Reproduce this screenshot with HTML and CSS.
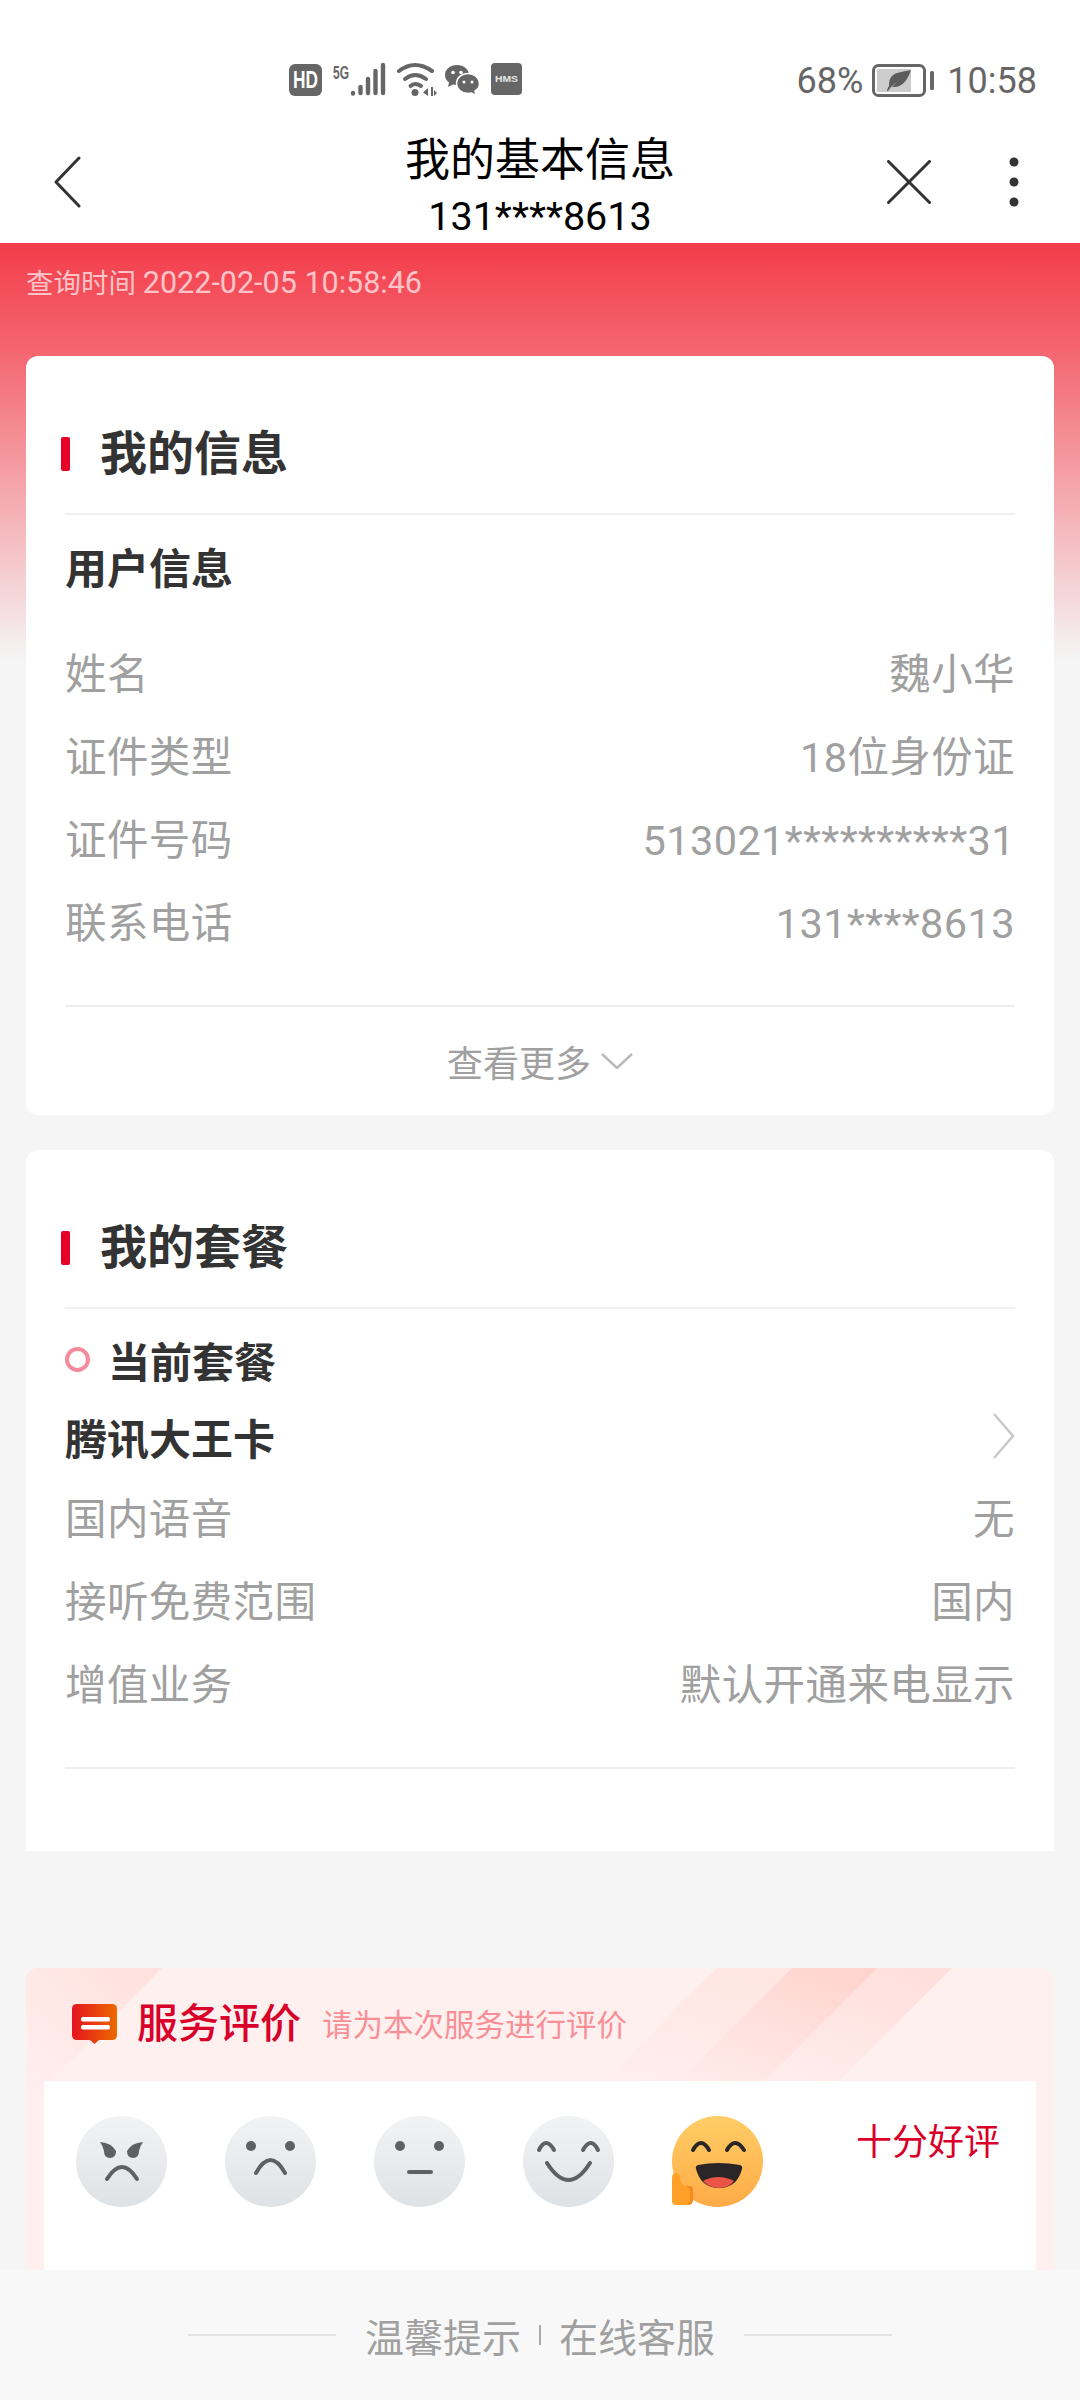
FILE: index.html
```html
<!DOCTYPE html>
<html>
<head>
    <title>我的基本信息</title>
    <link rel="stylesheet" href="styles.css">
</head>
<body>
    <div class="status-bar">
        <svg class="status-icons" viewBox="289 60 234 40" width="234" height="40">
            <rect x="289" y="64" width="33" height="32" rx="6" fill="#666"/>
            <text x="293" y="88" class="icon-text-hd" textLength="25" lengthAdjust="spacingAndGlyphs">HD</text>
            <text x="333" y="79" class="icon-text-5g" textLength="16" lengthAdjust="spacingAndGlyphs">5G</text>
            <g stroke="#666" stroke-width="4.4" stroke-linecap="round">
                <path d="M353 93.5V93"/>
                <path d="M360.5 93V87"/>
                <path d="M368 93V79"/>
                <path d="M375.500 93V71"/>
                <path d="M383 93V65"/>
            </g>
            <g stroke="#666" stroke-width="4" fill="none" stroke-linecap="round">
                <path d="M399 71Q415 59 432 71"/>
                <path d="M405 79Q415 71 426 79"/>
                <path d="M410.500 86Q415 82 421 86"/>
            </g>
            <circle cx="415" cy="92.500" r="3.500" fill="#666"/>
            <path d="M423 92.500L428 88V96ZM431 87H433V96H431ZM434 90L437 93L434 96Z" fill="#666"/>
            <path d="M457 65C450 65 445 69.500 445 75C445 78 446.500 80.500 449 82.500L448 87L453 84.500C454 84.700 455.500 85 457 85C464 85 469 80.500 469 75C469 69.500 464 65 457 65Z" fill="#666"/>
            <path d="M468 73.500C461.500 73.500 456.500 78 456.500 83.500C456.500 89 461.500 93.500 468 93.500C469.500 93.500 470.500 93.300 471.500 93L476 95.500L475 91C477.500 89.500 479.500 86.500 479.500 83.500C479.500 78 474.500 73.500 468 73.500Z" fill="#666" stroke="#fff" stroke-width="1.500"/>
            <circle cx="453" cy="72.500" r="1.800" fill="#fff"/>
            <circle cx="461" cy="72.500" r="1.800" fill="#fff"/>
            <circle cx="464" cy="82" r="1.500" fill="#fff"/>
            <circle cx="472" cy="82" r="1.500" fill="#fff"/>
            <rect x="491" y="63" width="31" height="32" rx="4" fill="#666"/>
            <text x="495" y="82" class="icon-text-hms" textLength="23" lengthAdjust="spacingAndGlyphs">HMS</text>
        </svg>
        <div class="status-right">
            <span>68%</span>
            <svg viewBox="0 0 62 34" width="62" height="34">
                <rect x="1.500" y="1.500" width="51" height="30" rx="5" fill="none" stroke="#666" stroke-width="3"/>
                <rect x="5" y="5" width="34" height="23" rx="1" fill="#ccc"/>
                <rect x="58" y="7" width="4" height="19" rx="1.500" fill="#666"/>
                <path d="M16 27C17 26 18 24 20 22C23 19 27 17 29 15C26 18 22 20 20 23C24 23 33 24 39 6C30 8 21 8 18 15C17 18 17 20 17 22C16 24 15 25 15 27Z" fill="#5c5c5c"/>
            </svg>
            <span class="status-time">10:58</span>
        </div>
    </div>

    <div class="nav-bar">
        <svg class="nav-back" viewBox="0 0 28 52" width="28" height="52">
            <path d="M26 2L3 26L26 50" fill="none" stroke="#333" stroke-width="3" stroke-linecap="round" stroke-linejoin="round"/>
        </svg>
        <div class="nav-title">
            <div class="nav-name">我的基本信息</div>
            <div class="nav-phone">131****8613</div>
        </div>
        <div class="nav-actions">
            <svg viewBox="0 0 44 44" width="44" height="44">
                <path d="M1.500 1.500L42.500 42.500M42.500 1.500L1.500 42.500" stroke="#333" stroke-width="3" stroke-linecap="round"/>
            </svg>
            <svg viewBox="0 0 10 52" width="10" height="52">
                <circle cx="5" cy="6" r="4.500" fill="#333"/>
                <circle cx="5" cy="26" r="4.500" fill="#333"/>
                <circle cx="5" cy="46" r="4.500" fill="#333"/>
            </svg>
        </div>
    </div>

    <div class="content">
        <div class="query-time">查询时间 <span class="query-value">2022-02-05 10:58:46</span></div>

        <div class="card">
            <div class="card-head"><i class="mark"></i>我的信息</div>
            <div class="sub-title">用户信息</div>
            <div class="rows">
                <div class="row"><span>姓名</span><span>魏小华</span></div>
                <div class="row"><span>证件类型</span><span>18位身份证</span></div>
                <div class="row"><span>证件号码</span><span>513021**********31</span></div>
                <div class="row"><span>联系电话</span><span>131****8613</span></div>
            </div>
            <div class="more">
                查看更多
                <svg viewBox="0 0 32 16" width="32" height="16">
                    <path d="M1 1L16 15L31 1" fill="none" stroke="#bbb" stroke-width="2.500"/>
                </svg>
            </div>
        </div>

        <div class="card card-plan">
            <div class="card-head"><i class="mark"></i>我的套餐</div>
            <div class="sub-title"><i class="ring"></i>当前套餐</div>
            <div class="plan-name">
                腾讯大王卡
                <svg viewBox="0 0 22 46" width="22" height="46">
                    <path d="M1 1L20 23L1 45" fill="none" stroke="#c8c8c8" stroke-width="2.500"/>
                </svg>
            </div>
            <div class="rows">
                <div class="row"><span>国内语音</span><span>无</span></div>
                <div class="row"><span>接听免费范围</span><span>国内</span></div>
                <div class="row"><span>增值业务</span><span>默认开通来电显示</span></div>
            </div>
        </div>

        <div class="rating">
            <svg class="rating-bg" viewBox="0 0 1028 302" width="1028" height="302">
                <defs>
                    <linearGradient id="g-left" x1="1" y1="0" x2="0" y2="1">
                        <stop offset="0" stop-color="#ffe0dc"/>
                        <stop offset="1" stop-color="#fff0f0"/>
                    </linearGradient>
                    <linearGradient id="g-a" x1="0.700" y1="0" x2="0.300" y2="1">
                        <stop offset="0" stop-color="#ffe6e2"/>
                        <stop offset="1" stop-color="#fff0f0"/>
                    </linearGradient>
                    <linearGradient id="g-b" x1="0.800" y1="0" x2="0.200" y2="1">
                        <stop offset="0" stop-color="#ffd5cf"/>
                        <stop offset="1" stop-color="#fff0f0"/>
                    </linearGradient>
                    <linearGradient id="g-c" x1="0.800" y1="0" x2="0.200" y2="1">
                        <stop offset="0" stop-color="#ffdfdb"/>
                        <stop offset="1" stop-color="#fff0f0"/>
                    </linearGradient>
                </defs>
                <path d="M136 0L0 138V0Z" fill="url(#g-left)"/>
                <path d="M691 0H766L620 146H545Z" fill="url(#g-a)"/>
                <path d="M766 0H852L706 146H620Z" fill="url(#g-b)"/>
                <path d="M852 0H926L780 146H706Z" fill="url(#g-c)"/>
            </svg>
            <div class="rating-head">
                <svg viewBox="0 0 45 40" width="45" height="40">
                    <defs>
                        <linearGradient id="g-bubble" x1="0" y1="0" x2="1" y2="0">
                            <stop offset="0" stop-color="#e5141f"/>
                            <stop offset="1" stop-color="#ec6a00"/>
                        </linearGradient>
                    </defs>
                    <path d="M5 0H40Q45 0 45 5V31Q45 36 40 36H27L22.500 40L18 36H5Q0 36 0 31V5Q0 0 5 0Z" fill="url(#g-bubble)"/>
                    <rect x="9" y="13" width="29" height="4.500" rx="2" fill="#fff"/>
                    <rect x="9" y="21" width="29" height="4.500" rx="2" fill="#fff"/>
                </svg>
                <span class="rating-title">服务评价</span>
                <span class="rating-sub">请为本次服务进行评价</span>
            </div>
            <div class="rating-body">
                <div class="faces">
                    <div class="face">
                        <svg viewBox="0 0 91 91" width="91" height="91">
                            <path d="M24 26Q36 27 40 35Q40 42 34 42Q28 42 28 35Q27 30 24 26Z" fill="#5f6063"/>
                            <path d="M67 26Q55 27 51 35Q51 42 57 42Q63 42 63 35Q64 30 67 26Z" fill="#5f6063"/>
                            <path d="M31 63Q46 39 61 63" fill="none" stroke="#5f6063" stroke-width="4" stroke-linecap="round"/>
                        </svg>
                    </div>
                    <div class="face">
                        <svg viewBox="0 0 91 91" width="91" height="91">
                            <circle cx="26" cy="30" r="5" fill="#5f6063"/>
                            <circle cx="65" cy="30" r="5" fill="#5f6063"/>
                            <path d="M31 57Q45.500 31 60 57" fill="none" stroke="#5f6063" stroke-width="4" stroke-linecap="round"/>
                        </svg>
                    </div>
                    <div class="face">
                        <svg viewBox="0 0 91 91" width="91" height="91">
                            <circle cx="26" cy="30" r="5" fill="#5f6063"/>
                            <circle cx="65" cy="30" r="5" fill="#5f6063"/>
                            <path d="M35 56H57" fill="none" stroke="#5f6063" stroke-width="4" stroke-linecap="round"/>
                        </svg>
                    </div>
                    <div class="face">
                        <svg viewBox="0 0 91 91" width="91" height="91">
                            <path d="M16 34Q23 20 31 34M60 34Q68 20 75 34" fill="none" stroke="#5f6063" stroke-width="4" stroke-linecap="round"/>
                            <path d="M24 47Q45.500 81 67 47" fill="none" stroke="#5f6063" stroke-width="4" stroke-linecap="round"/>
                        </svg>
                    </div>
                    <div class="face face-on">
                        <svg viewBox="0 0 91 91" width="91" height="91">
                            <path d="M21 34Q29 20 37 34M55 34Q63 20 72 34" fill="none" stroke="#2a2527" stroke-width="4" stroke-linecap="round"/>
                            <path d="M26 49Q46 45 68 49Q71 50 70 53Q65 72 47 72Q29 72 24 53Q23 50 26 49Z" fill="#2a2527"/>
                            <path d="M31 65Q46 57 62 65Q57 72 47 72Q37 72 31 65Z" fill="#ea5545"/>
                            <path d="M6 70Q10 70 14 70H18Q21 70 21 74V84Q21 89 16 89H6Z" fill="#f58a1f"/>
                            <path d="M0 62Q0 57 4 57Q8 57 8 62Q9 68 13 70Q18 71 18 75V84Q18 89 13 89H4Q0 89 0 85Z" fill="#ffa028"/>
                        </svg>
                    </div>
                </div>
                <div class="rating-label">十分好评</div>
            </div>
        </div>
    </div>

    <div class="tips">
        <i class="tips-line"></i>
        <span>温馨提示</span>
        <i class="tips-sep"></i>
        <span>在线客服</span>
        <i class="tips-line"></i>
    </div>
</body>
</html>
```

FILE: styles.css
```css
* {
    box-sizing: border-box;
}

html, body {
    margin: 0;
    padding: 0;
}

body {
    width: 1080px;
    height: 2400px;
    overflow: hidden;
    display: flex;
    flex-direction: column;
    font-family: Roboto, "Noto Sans CJK SC", sans-serif;
    background-color: #f5f5f5;
    color: #333;
}

i {
    display: block;
}

svg {
    display: block;
    flex: none;
}

/* status bar */
.status-bar {
    height: 120px;
    padding: 60px 43px 20px 289px;
    display: flex;
    align-items: center;
    background: #fff;
    color: #666;
    font-size: 36px;
}

.status-right {
    margin-left: auto;
    display: flex;
    align-items: center;
    gap: 9px;
    padding-top: 2px;
}

.status-time {
    margin-left: 4px;
}

.icon-text-hd {
    font: 700 24px "Liberation Sans", sans-serif;
    fill: #fff;
}

.icon-text-5g {
    font: 700 18px "Liberation Sans", sans-serif;
    fill: #666;
}

.icon-text-hms {
    font: 700 9px "Liberation Sans", sans-serif;
    fill: #e6e6e6;
}

/* nav */
.nav-bar {
    height: 123px;
    display: grid;
    grid-template-columns: 1fr auto 1fr;
    background: #fff;
}

.nav-back {
    align-self: center;
    margin-left: 53px;
}

.nav-title {
    padding-top: 16px;
    text-align: center;
    color: #000;
}

.nav-name {
    font-size: 45px;
    line-height: 50px;
}

.nav-phone {
    margin-top: 4px;
    font-size: 39.5px;
    line-height: 54px;
}

.nav-actions {
    align-self: center;
    justify-self: end;
    padding-right: 61px;
    display: flex;
    align-items: center;
    gap: 78px;
}

/* page */
.content {
    flex: 1;
    min-height: 0;
    overflow: hidden;
    padding: 0 26px;
    background: linear-gradient(#f33d4a 0, #f4656f 105px, #f5f5f5 417px) no-repeat;
}

.query-time {
    height: 113px;
    padding-top: 22px;
    font-size: 27.5px;
    line-height: 36px;
    color: #ffc4c8;
}

.query-value {
    font-size: 30.5px;
}

.card {
    padding: 0 39px;
    background: #fff;
    border-radius: 12px;
}

.card-plan {
    margin-top: 35px;
    padding-bottom: 82px;
    border-radius: 12px 12px 0 0;
}

.card-head {
    height: 159px;
    padding-top: 68px;
    display: flex;
    align-items: flex-start;
    border-bottom: 2px solid #f0f0f0;
    font-size: 47px;
    line-height: 60px;
    font-weight: 700;
}

.mark {
    width: 9px;
    height: 34px;
    margin: 13px 30px 0 -4px;
    border-radius: 2px;
    background: #e60027;
}

.sub-title {
    height: 104px;
    padding-bottom: 4px;
    display: flex;
    align-items: center;
    font-size: 42px;
    font-weight: 700;
}

.ring {
    width: 25px;
    height: 25px;
    margin-right: 18px;
    border: 4px solid #f58a9c;
    border-radius: 50%;
}

.rows {
    padding-bottom: 40px;
    border-bottom: 2px solid #eee;
    margin-top: 14px;
}

.card-plan .rows {
    margin-top: 0;
}

.row {
    display: flex;
    justify-content: space-between;
    font-size: 41.5px;
    letter-spacing: 0.4px;
    line-height: 83px;
    color: #a0a0a0;
}

.more {
    height: 108px;
    display: flex;
    align-items: center;
    justify-content: center;
    gap: 10px;
    font-size: 36px;
    color: #a0a0a0;
}

.plan-name {
    height: 50px;
    padding-bottom: 4px;
    margin-bottom: 15px;
    display: flex;
    align-items: center;
    justify-content: space-between;
    font-size: 42px;
    font-weight: 700;
}

/* rating */
.rating {
    position: relative;
    margin-top: 117px;
    padding: 0 18px;
    height: 340px;
    background: #fff0f0;
    border-radius: 12px 12px 0 0;
    overflow: hidden;
}

.rating-bg {
    position: absolute;
    top: 0;
    left: 0;
}

.rating-head {
    position: relative;
    height: 113px;
    padding: 36px 0 0 28px;
    display: flex;
    align-items: flex-start;
}

.rating-title {
    margin-left: 20px;
    font-size: 41px;
    line-height: 40px;
    font-weight: 500;
    color: #d9002a;
}

.rating-sub {
    margin-left: 21px;
    font-size: 30.5px;
    line-height: 44px;
    color: #f98f96;
}

.rating-body {
    position: relative;
    height: 227px;
    padding: 35px 36px 0 32px;
    display: flex;
    justify-content: space-between;
    align-items: flex-start;
    background: #fff;
}

.faces {
    display: flex;
    gap: 58px;
}

.face {
    width: 91px;
    height: 91px;
    border-radius: 50%;
    background: linear-gradient(#f2f3f5, #dfe2e5);
}

.face-on {
    background: linear-gradient(#ffcd66, #ffab47);
}

.rating-label {
    font-size: 36px;
    line-height: 54px;
    color: #d9002a;
}

/* footer */
.tips {
    height: 130px;
    flex: none;
    display: flex;
    align-items: center;
    justify-content: center;
    background: #f8f8f8;
    font-size: 39px;
    color: #a0a0a0;
}

.tips-line {
    width: 148px;
    height: 2px;
    margin: 0 29px;
    background: #e2e2e2;
}

.tips-sep {
    width: 2px;
    height: 20px;
    margin: 0 18px;
    background: #aaa;
}
```
